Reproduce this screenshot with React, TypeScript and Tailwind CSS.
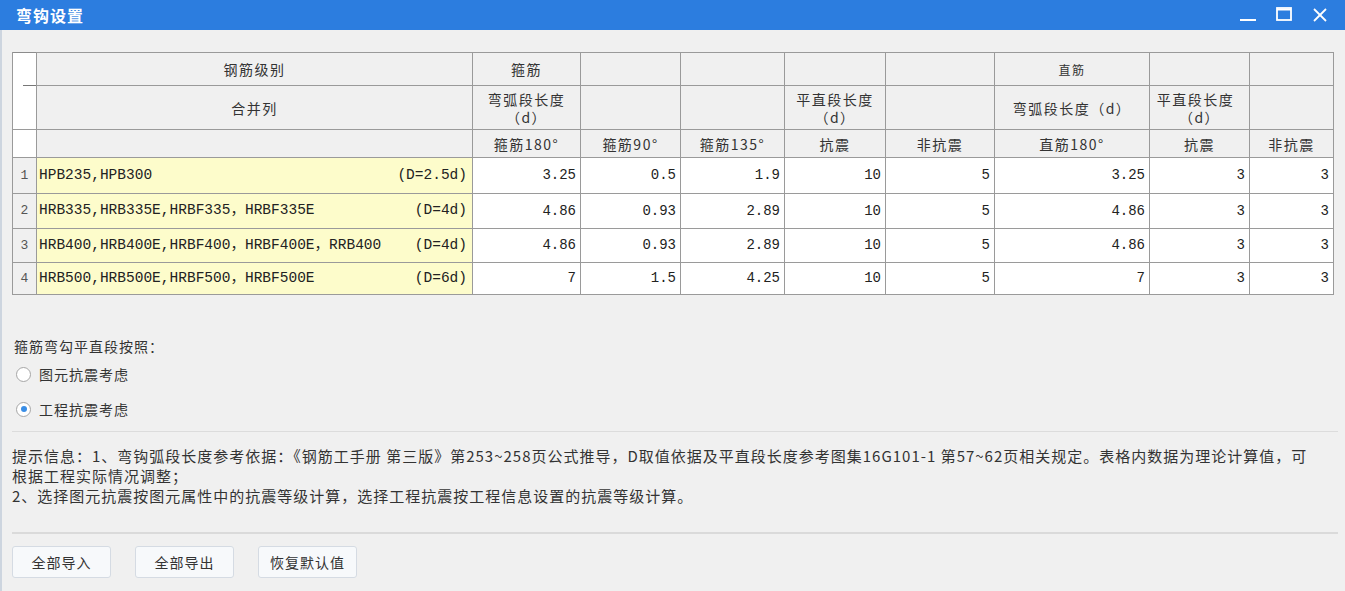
import React from "react";

const cjk = '"Noto Sans CJK SC", "Noto Sans", sans-serif';
const mono = '"Liberation Mono", "Noto Sans CJK SC", monospace';

const rows = [
  { n: "1", name: "HPB235,HPB300", d: "(D=2.5d)", v: ["3.25", "0.5", "1.9", "10", "5", "3.25", "3", "3"], h: "h-[36px]" },
  { n: "2", name: "HRB335,HRB335E,HRBF335，HRBF335E", d: "(D=4d)", v: ["4.86", "0.93", "2.89", "10", "5", "4.86", "3", "3"], h: "h-[35px]" },
  { n: "3", name: "HRB400,HRB400E,HRBF400，HRBF400E，RRB400", d: "(D=4d)", v: ["4.86", "0.93", "2.89", "10", "5", "4.86", "3", "3"], h: "h-[34px]" },
  { n: "4", name: "HRB500,HRB500E,HRBF500，HRBF500E", d: "(D=6d)", v: ["7", "1.5", "4.25", "10", "5", "7", "3", "3"], h: "h-[32px]" },
];

const th = "border border-[#9a9a9a] bg-[#f0f0f0] text-[14px] tracking-[1.5px] text-[#333] font-normal text-center align-middle p-0 leading-[18px] whitespace-nowrap";

function Radio({ checked, label }: { checked?: boolean; label: string }) {
  return (
    <div className="flex items-center gap-[8px] h-[20px]">
      <div className="w-[15px] h-[15px] rounded-full border border-[#a6a6a6] bg-white flex items-center justify-center">
        {checked && <div className="w-[6px] h-[6px] rounded-full bg-[#3a8ee6]" />}
      </div>
      <span className="text-[14px] tracking-[1px] text-[#333]">{label}</span>
    </div>
  );
}

function Btn({ label }: { label: string }) {
  return (
    <button className="w-[99px] h-[32px] bg-[#f7f9fb] border border-[#d5dbe3] rounded-[3px] text-[14px] tracking-[1px] text-[#333]">
      {label}
    </button>
  );
}

function TwoLine({ top, shift }: { top: string; shift?: boolean }) {
  return (
    <div className="flex flex-col items-center">
      <span className={shift ? "-ml-[8px]" : ""}>{top}</span>
      <span>（d）</span>
    </div>
  );
}

export default function App() {
  return (
    <div className="w-[1345px] h-[591px] overflow-hidden bg-[#f0f0f0] flex flex-col" style={{ fontFamily: cjk }}>
      {/* Title bar */}
      <div className="h-[30px] bg-[#2c7ddf] flex items-center justify-between shrink-0">
        <span className="pl-[16px] text-white text-[16px] tracking-[1px] font-bold">弯钩设置</span>
        <div className="flex items-center h-full">
          <svg width="20" height="20" viewBox="0 0 20 20" className="mr-[16px]">
            <line x1="2" y1="15" x2="18" y2="15" stroke="white" strokeWidth="2" />
          </svg>
          <svg width="20" height="20" viewBox="0 0 20 20" className="mr-[16px]">
            <rect x="3" y="3" width="14" height="12" fill="none" stroke="white" strokeWidth="1.8" />
            <line x1="3" y1="4.5" x2="17" y2="4.5" stroke="white" strokeWidth="2" />
          </svg>
          <svg width="20" height="20" viewBox="0 0 20 20" className="mr-[15px]">
            <line x1="4" y1="4" x2="16" y2="16" stroke="white" strokeWidth="1.8" />
            <line x1="16" y1="4" x2="4" y2="16" stroke="white" strokeWidth="1.8" />
          </svg>
        </div>
      </div>

      <div className="flex-1 border-l-2 border-[#cdd5df] pl-[10px] pr-[7px] pt-[22px]">
        {/* Table */}
        <table className="table-fixed border-collapse border border-[#8c8c8c] w-[1321px]">
          <colgroup>
            <col className="w-[24px]" />
            <col className="w-[436px]" />
            <col className="w-[108px]" />
            <col className="w-[100px]" />
            <col className="w-[104px]" />
            <col className="w-[101px]" />
            <col className="w-[109px]" />
            <col className="w-[155px]" />
            <col className="w-[100px]" />
            <col className="w-[84px]" />
          </colgroup>
          <thead>
            <tr className="h-[33px]">
              <th className="border-x border-[#9a9a9a] bg-white p-0" rowSpan={2}>
                <div className="h-[76px] relative">
                  <div className="absolute left-[10px] right-0 top-[32px] h-px bg-[#777]" />
                </div>
              </th>
              <th className={th}>钢筋级别</th>
              <th className={th}>箍筋</th>
              <th className={th}></th>
              <th className={th}></th>
              <th className={th}></th>
              <th className={th}></th>
              <th className={th}><span className="text-[12px]">直筋</span></th>
              <th className={th}></th>
              <th className={th}></th>
            </tr>
            <tr className="h-[43px]">
              <th className={th}>合并列</th>
              <th className={th}><TwoLine top="弯弧段长度" /></th>
              <th className={th}></th>
              <th className={th}></th>
              <th className={th}><TwoLine top="平直段长度" /></th>
              <th className={th}></th>
              <th className={th}>弯弧段长度（d）</th>
              <th className={th}><TwoLine top="平直段长度" shift /></th>
              <th className={th}></th>
            </tr>
            <tr className="h-[28px]">
              <th className="border border-[#9a9a9a] bg-white p-0"></th>
              <th className={th}></th>
              <th className={th}>箍筋180°</th>
              <th className={th}>箍筋90°</th>
              <th className={th}>箍筋135°</th>
              <th className={th}>抗震</th>
              <th className={th}>非抗震</th>
              <th className={th}>直筋180°</th>
              <th className={th}>抗震</th>
              <th className={th}>非抗震</th>
            </tr>
          </thead>
          <tbody>
            {rows.map((r) => (
              <tr key={r.n} className={r.h}>
                <td className="border border-[#9a9a9a] bg-[#f0f0f0] text-center text-[13px] text-[#555] p-0" style={{ fontFamily: mono }}>
                  {r.n}
                </td>
                <td className="border border-[#9a9a9a] bg-[#fdfccb] p-0">
                  <div className="flex justify-between items-center pl-[2px] pr-[5px] text-[14.5px] text-[#222] whitespace-nowrap" style={{ fontFamily: mono }}>
                    <span>{r.name}</span>
                    <span>{r.d}</span>
                  </div>
                </td>
                {r.v.map((v, i) => (
                  <td
                    key={i}
                    className="border border-[#9a9a9a] bg-white text-right text-[14px] text-[#222] p-0"
                    style={{ fontFamily: mono }}
                  >
                    <span className="pr-[4px]">{v}</span>
                  </td>
                ))}
              </tr>
            ))}
          </tbody>
        </table>

        {/* Options */}
        <div className="mt-[41px] pl-[2px] flex flex-col">
          <div className="text-[14px] tracking-[1px] text-[#333] h-[20px] leading-[20px]">箍筋弯勾平直段按照：</div>
          <div className="mt-[8px] pl-[2px]">
            <Radio label="图元抗震考虑" />
          </div>
          <div className="mt-[15px] pl-[2px]">
            <Radio checked label="工程抗震考虑" />
          </div>
        </div>

        <div className="mt-[12px] h-px bg-[#dcdcdc] w-[1326px]" />

        <div className="mt-[14px] text-[15px] tracking-[1px] leading-[20px] text-[#333] w-[1326px] flex flex-col whitespace-nowrap">
          <span>提示信息：1、弯钩弧段长度参考依据：《钢筋工手册 第三版》第253~258页公式推导，D取值依据及平直段长度参考图集16G101-1 第57~62页相关规定。表格内数据为理论计算值，可</span>
          <span>根据工程实际情况调整；</span>
          <span>2、选择图元抗震按图元属性中的抗震等级计算，选择工程抗震按工程信息设置的抗震等级计算。</span>
        </div>

        <div className="mt-[26px] h-[2px] bg-[#dadada] w-[1326px]" />

        <div className="mt-[12px] flex gap-[24px]">
          <Btn label="全部导入" />
          <Btn label="全部导出" />
          <Btn label="恢复默认值" />
        </div>
      </div>
    </div>
  );
}
